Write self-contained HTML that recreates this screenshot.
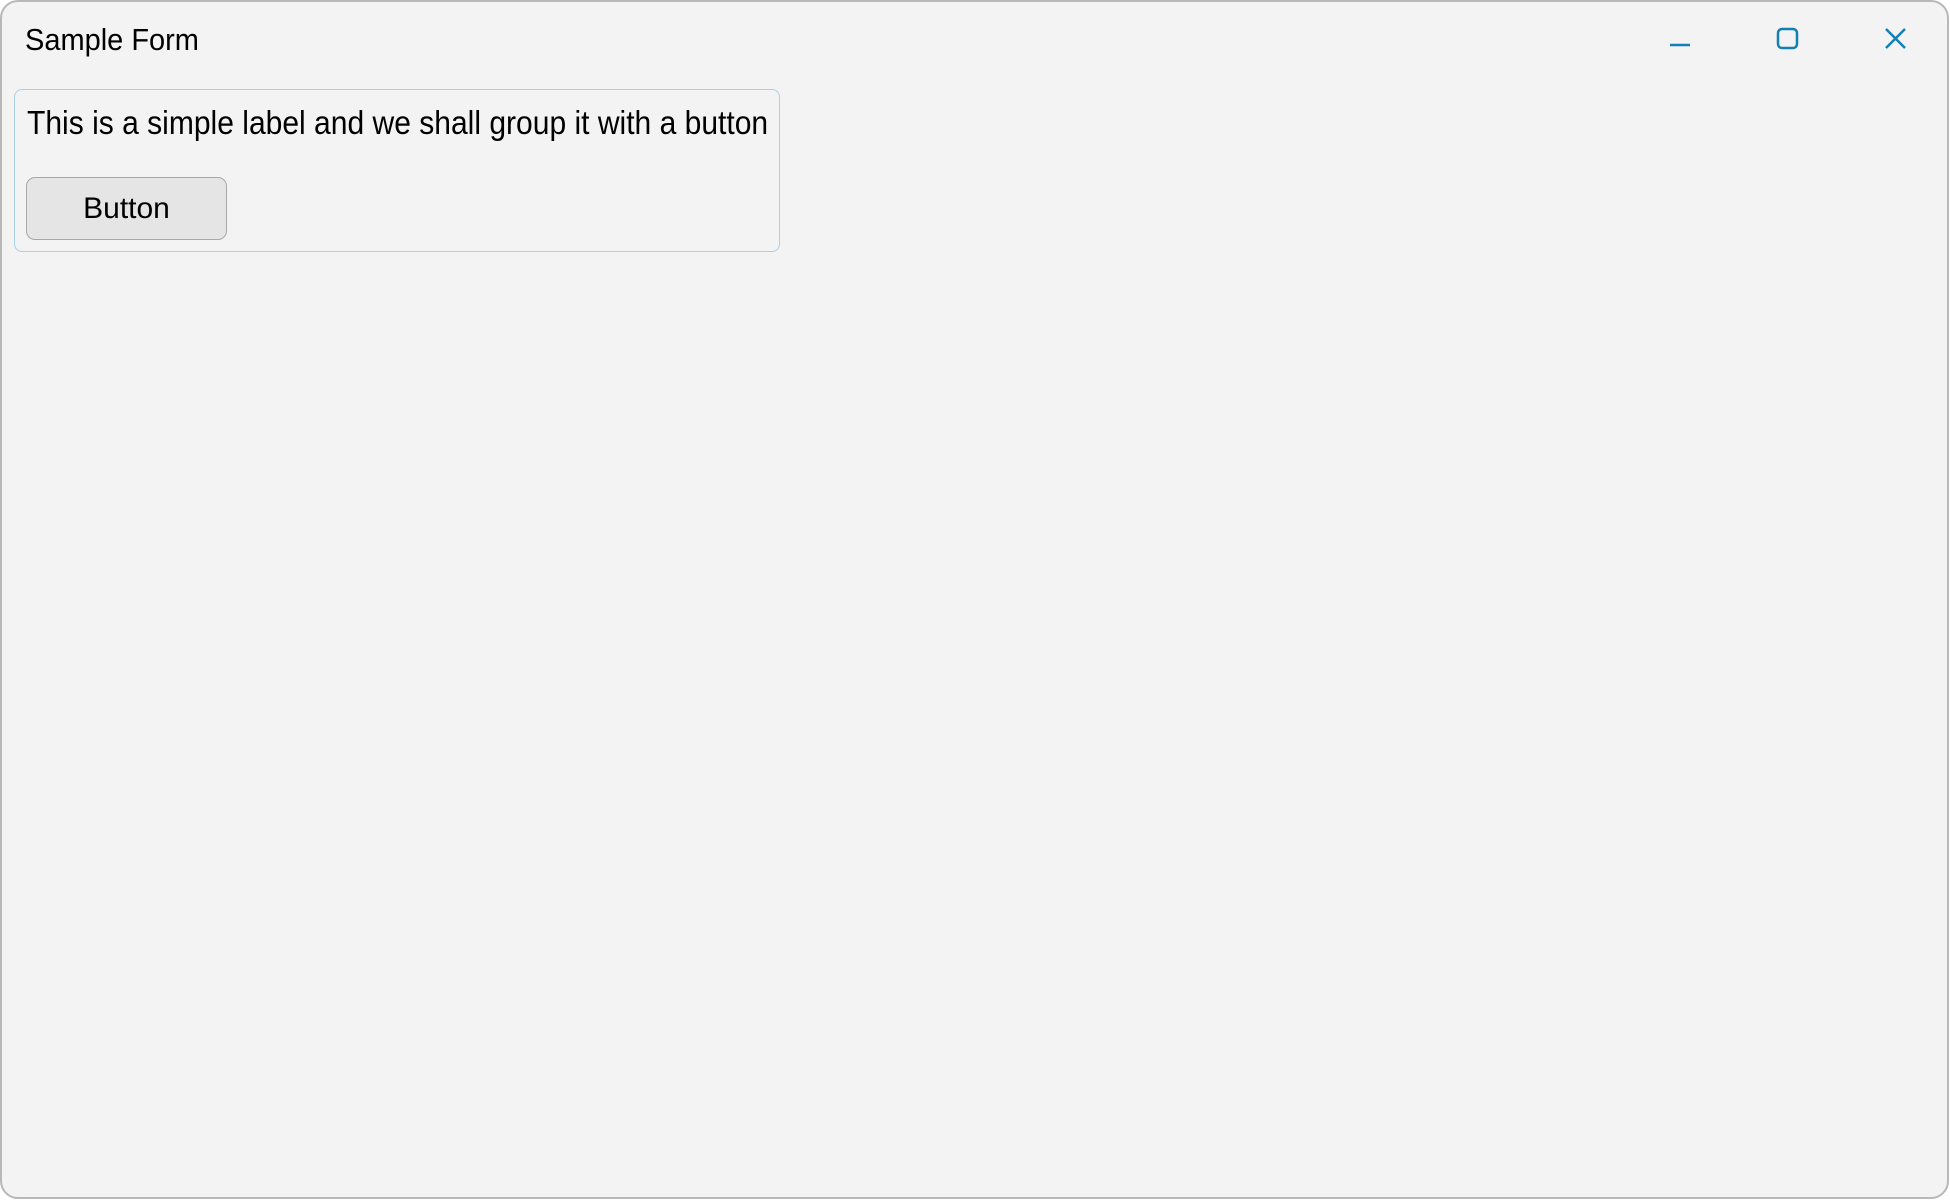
<!DOCTYPE html>
<html><head><meta charset="utf-8"><style>
html,body{margin:0;padding:0;width:1950px;height:1200px;background:#fff;overflow:hidden}
.win{position:absolute;left:0;top:0;width:1945px;height:1195px;border:2.5px solid #b8b8b8;border-radius:18px;background:#f3f3f3;box-sizing:content-box}
.t{position:absolute;font-family:"Liberation Sans",sans-serif;color:#000;white-space:nowrap}
.grp{position:absolute;left:12px;top:87px;width:764px;height:161px;border:1.5px solid #a9d0e3;border-radius:8px}
.btn{position:absolute;left:24px;top:175px;width:201px;height:63px;border:1.5px solid #a8a8a8;border-radius:9px;background:#e5e5e5;box-sizing:border-box;display:flex;align-items:center;justify-content:center;font-family:"Liberation Sans",sans-serif;font-size:30px;color:#000}
</style></head><body>
<div class="win">
<div class="t" style="left:23px;top:20px;font-size:31px;transform:scaleX(0.935);transform-origin:left">Sample Form</div>
<div class="grp"></div>
<div class="t" style="left:25px;top:102px;font-size:33px;transform:scaleX(0.91);transform-origin:left">This is a simple label and we shall group it with a button</div>
<div class="btn">Button</div>
<svg style="position:absolute;left:0;top:0" width="1950" height="80">
<g stroke="#1380b4" stroke-width="2.5" fill="none">
<line x1="1668" y1="43" x2="1688" y2="43"/>
<rect x="1776" y="27" width="19" height="19" rx="4"/>
<line x1="1884" y1="27" x2="1903" y2="46"/>
<line x1="1903" y1="27" x2="1884" y2="46"/>
</g></svg>
</div>
</body></html>
